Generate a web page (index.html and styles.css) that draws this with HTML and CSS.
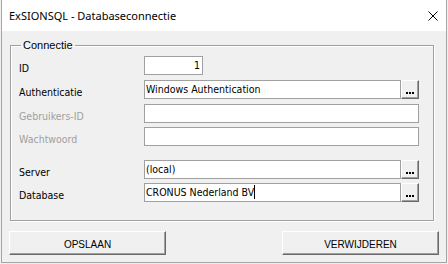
FILE: index.html
```html
<!DOCTYPE html>
<html>
<head>
    <meta charset="utf-8">
    <title>ExSIONSQL - Databaseconnectie</title>
    <link rel="stylesheet" href="styles.css">
</head>
<body>
  <div class="window">
    <div class="titlebar">
        <span class="title">ExSIONSQL - Databaseconnectie</span>
        <svg class="close" width="10" height="10" viewBox="0 0 10 10">
            <path d="M0.5 0.5L9.5 9.5M9.5 0.5L0.5 9.5" stroke="#000" stroke-width="1" fill="none"/>
        </svg>
    </div>
    <div class="content">
        <fieldset class="group">
            <legend>Connectie</legend>
            <div class="row">
                <label>ID</label>
                <div class="field field-id">1</div>
            </div>
            <div class="row">
                <label>Authenticatie</label>
                <div class="field field-pick">Windows Authentication</div>
                <button class="pick"><svg width="8" height="2"><rect x="0" width="2" height="2"/><rect x="3" width="2" height="2"/><rect x="6" width="2" height="2"/></svg></button>
            </div>
            <div class="row">
                <label class="disabled">Gebruikers-ID</label>
                <div class="field"></div>
            </div>
            <div class="row tight">
                <label class="disabled">Wachtwoord</label>
                <div class="field"></div>
            </div>
            <div class="row spaced">
                <label>Server</label>
                <div class="field field-pick">(local)</div>
                <button class="pick"><svg width="8" height="2"><rect x="0" width="2" height="2"/><rect x="3" width="2" height="2"/><rect x="6" width="2" height="2"/></svg></button>
            </div>
            <div class="row tight">
                <label>Database</label>
                <div class="field field-pick">CRONUS Nederland BV<span class="caret"></span></div>
                <button class="pick"><svg width="8" height="2"><rect x="0" width="2" height="2"/><rect x="3" width="2" height="2"/><rect x="6" width="2" height="2"/></svg></button>
            </div>
        </fieldset>
        <div class="actions">
            <button class="btn">OPSLAAN</button>
            <button class="btn">VERWIJDEREN</button>
        </div>
    </div>
  </div>
</body>
</html>
```

FILE: styles.css
```css
body {
    margin: 0;
    background-color: #f0f0f0;
    font-family: "Liberation Sans", Arial, sans-serif;
}

/* venster */
.window {
    margin: 0 1px;
    height: 263px;
    box-sizing: border-box;
    border: 1px solid #a5a5a5;
    border-top: none;
    background-color: #f0f0f0;
    display: flex;
    flex-direction: column;
}

.titlebar {
    height: 31px;
    background-color: #fff;
    display: flex;
    align-items: center;
    justify-content: space-between;
    padding: 0 8px 0 7px;
}

.title {
    font-family: "Noto Sans", "Liberation Sans", sans-serif;
    font-size: 11px;
    color: #000;
}

.close {
    display: block;
}

.content {
    flex: 1;
    padding: 8px 12px 0 8px;
}

/* groepsvak */
.group {
    margin: 0;
    min-width: 0;
    padding: 4px 8px 18px 8px;
    border: 1px solid #a0a0a0;
    box-shadow: inset 1px 1px #fff, 1px 1px #fff;
}

.group legend {
    margin-left: 2px;
    padding: 0 2px;
    font-size: 11px;
    line-height: 13px;
    color: #000;
}

.row {
    display: flex;
    height: 19px;
}

.row + .row {
    margin-top: 5px;
}

.row.tight {
    margin-top: 4px;
}

.row.spaced {
    margin-top: 14px;
}

.row label {
    width: 125px;
    height: 19px;
    box-sizing: border-box;
    padding-top: 3px;
    font-family: "DejaVu Sans Condensed", "Liberation Sans", sans-serif;
    font-size: 10.5px;
    line-height: 19px;
    color: #000;
}

.row label.disabled {
    color: #a0a0a0;
}

.field {
    width: 275px;
    height: 19px;
    box-sizing: border-box;
    border: 1px solid #a0a0a0;
    background-color: #fff;
    padding: 0 2px 0 1px;
    font-family: "DejaVu Sans Condensed", "Liberation Sans", sans-serif;
    font-size: 10.5px;
    line-height: 17px;
    color: #000;
    white-space: nowrap;
}

.field-id {
    width: 59px;
    text-align: right;
}

.field-pick {
    width: 257px;
}

.caret {
    display: inline-block;
    width: 1px;
    height: 14px;
    margin-top: 1px;
    vertical-align: top;
    background-color: #000;
}

/* knop met puntjes */
.pick {
    width: 18px;
    height: 19px;
    margin: 0;
    padding: 0 0 4px 0;
    box-sizing: border-box;
    background-color: #f0f0f0;
    border: 1px solid;
    border-color: #fff #696969 #696969 #fff;
    box-shadow: inset -1px -1px #a0a0a0;
    display: flex;
    align-items: flex-end;
    justify-content: center;
}

.pick svg {
    display: block;
    fill: #000;
}

.actions {
    display: flex;
    justify-content: space-between;
    margin: 10px -5px 0 -1px;
}

.btn {
    width: 157px;
    height: 24px;
    margin: 0;
    padding: 2px 0 0 0;
    box-sizing: border-box;
    background-color: #f0f0f0;
    border: 1px solid;
    border-color: #fff #696969 #696969 #fff;
    box-shadow: inset -1px -1px #a0a0a0;
    font-family: "Liberation Sans", Arial, sans-serif;
    font-size: 10px;
    color: #000;
}
```
